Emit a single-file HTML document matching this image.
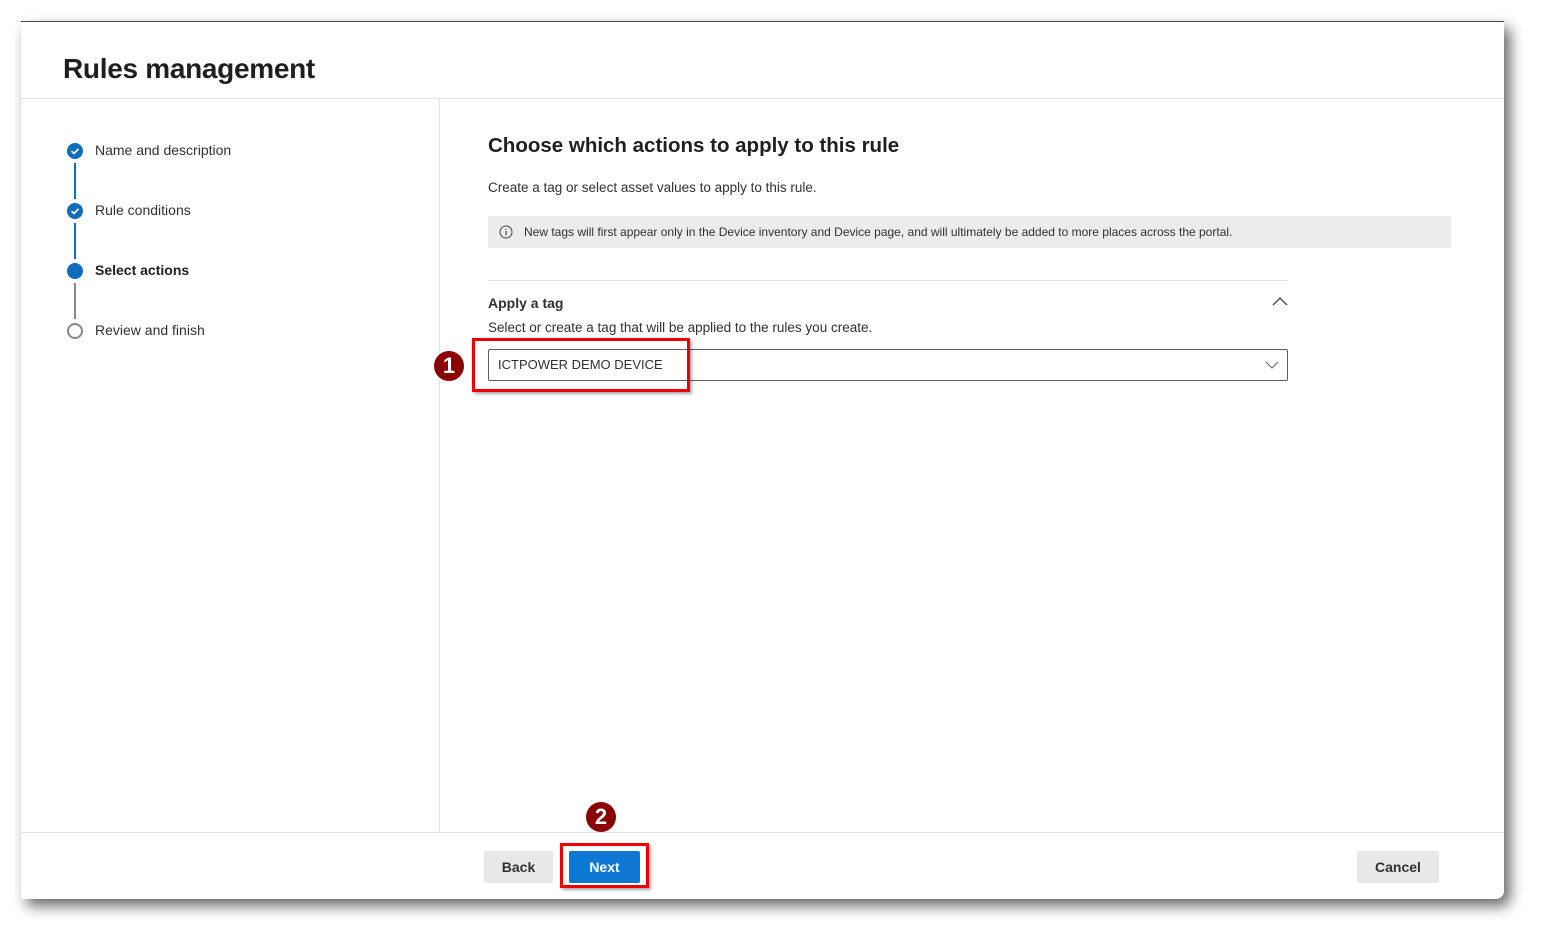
<!DOCTYPE html>
<html><head><meta charset="utf-8"><style>
*{box-sizing:border-box;margin:0;padding:0}
body{width:1549px;height:943px;background:#fff;position:relative;overflow:hidden;font-family:"Liberation Sans",sans-serif;color:#323130}
.card{position:absolute;left:21px;top:21px;width:1483px;height:878px;background:#fff;border-top:1px solid #444;border-radius:0 0 8px 0;box-shadow:6px 7px 14px rgba(0,0,0,.6)}
.abs{position:absolute}
h1{position:absolute;left:42px;top:31px;font-size:28px;font-weight:bold;color:#201f1e;letter-spacing:-0.3px}
.hline{position:absolute;left:0;right:0;height:1px;background:#e3e3e3}
.vline{position:absolute;left:418px;top:76px;width:1px;height:735px;background:#e3e3e3}
.step{position:absolute;left:74px;font-size:14px;color:#323130}
.dot{position:absolute;left:46px;width:16px;height:16px;border-radius:50%;background:#0f6cbd}
.conn{position:absolute;left:53px;width:2px;height:36px;background:#0f6cbd}
.btn{position:absolute;height:32px;border-radius:2px;font-size:14px;font-weight:bold;text-align:center;line-height:32px}
.red{position:absolute;border:3px solid #e00;box-shadow:2px 2px 3px rgba(0,0,0,.35)}
.num{position:absolute;width:30px;height:30px;border-radius:50%;background:#8b0000;color:#fff;font-weight:bold;font-size:22px;text-align:center;line-height:30px}
</style></head><body>
<div class="card">
<h1>Rules management</h1>
<div class="hline" style="top:76px"></div>
<div class="vline"></div>
<div class="hline" style="top:810px"></div>

<div class="dot" style="top:121px"><svg width="16" height="16"><path d="M4.5 8.2 L7 10.5 L11.5 5.8" fill="none" stroke="#fff" stroke-width="1.6"/></svg></div>
<div class="conn" style="top:141px"></div>
<div class="step" style="top:120px">Name and description</div>
<div class="dot" style="top:181px"><svg width="16" height="16"><path d="M4.5 8.2 L7 10.5 L11.5 5.8" fill="none" stroke="#fff" stroke-width="1.6"/></svg></div>
<div class="conn" style="top:201px"></div>
<div class="step" style="top:180px">Rule conditions</div>
<div class="dot" style="top:241px"></div>
<div class="conn" style="top:261px;background:#8a8886"></div>
<div class="step" style="top:240px;font-weight:bold;color:#201f1e">Select actions</div>
<div class="dot" style="top:301px;background:#fff;border:2px solid #8a8886"></div>
<div class="step" style="top:300px">Review and finish</div>

<div class="abs" style="left:467px;top:112px;font-size:20.5px;font-weight:bold;color:#201f1e">Choose which actions to apply to this rule</div>
<div class="abs" style="left:467px;top:158px;font-size:13.5px">Create a tag or select asset values to apply to this rule.</div>
<div class="abs" style="left:467px;top:194px;width:963px;height:32px;background:#ececec;font-size:12px;line-height:32px;padding-left:36px">
<svg class="abs" style="left:11px;top:9px" width="14" height="14"><circle cx="7" cy="7" r="6" fill="none" stroke="#444" stroke-width="1"/><path d="M7 6v4.5M7 4v1" stroke="#444" stroke-width="1.1"/></svg>
New tags will first appear only in the Device inventory and Device page, and will ultimately be added to more places across the portal.</div>
<div class="abs" style="left:467px;top:258px;width:800px;height:1px;background:#e3e3e3"></div>
<div class="abs" style="left:467px;top:273px;font-size:14px;font-weight:bold">Apply a tag</div>
<svg class="abs" style="left:1250px;top:274px" width="18" height="12"><path d="M2 9 L9 2 L16 9" fill="none" stroke="#444" stroke-width="1.3"/></svg>
<div class="abs" style="left:467px;top:298px;font-size:13.5px">Select or create a tag that will be applied to the rules you create.</div>
<div class="abs" style="left:467px;top:327px;width:800px;height:32px;border:1px solid #605e5c;border-radius:2px;font-size:13px;line-height:30px;padding-left:9px">ICTPOWER DEMO DEVICE
<svg class="abs" style="left:776px;top:10px" width="14" height="10"><path d="M1 2 L7 8 L13 2" fill="none" stroke="#666" stroke-width="1.1"/></svg></div>
<div class="red" style="left:451px;top:316px;width:218px;height:54px"></div>
<div class="num" style="left:413px;top:329px">1</div>

<div class="btn" style="left:463px;top:829px;width:69px;background:#e8e8e8;color:#323130">Back</div>
<div class="btn" style="left:548px;top:829px;width:71px;background:#0f78d4;color:#fff">Next</div>
<div class="red" style="left:539px;top:821px;width:89px;height:45px"></div>
<div class="num" style="left:565px;top:780px">2</div>
<div class="btn" style="left:1336px;top:829px;width:82px;background:#e8e8e8;color:#323130">Cancel</div>
</div>
</body></html>
